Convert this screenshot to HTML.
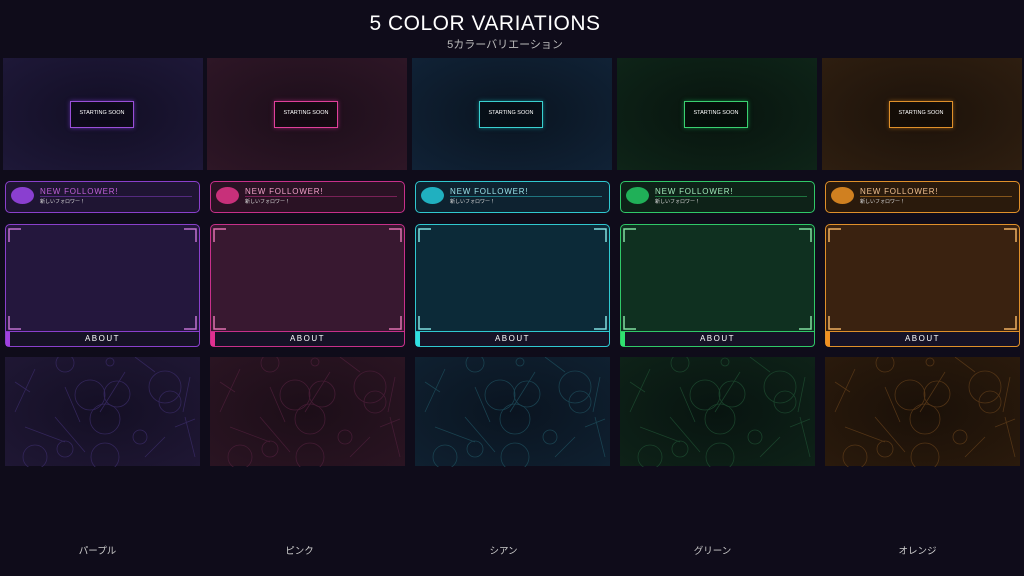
<!DOCTYPE html><html><head><meta charset="utf-8"><style>
*{margin:0;padding:0;box-sizing:border-box}
body{width:1024px;height:576px;background:#0f0c1a;position:relative;overflow:hidden;font-family:"Liberation Sans","Noto Sans CJK JP",sans-serif;color:#fff}
.a{position:absolute}
.title{left:0;width:970px;top:12px;text-align:center;font-size:21px;letter-spacing:0.5px}
.sub{left:0;width:1010px;top:36px;text-align:center;font-size:11px;color:#bbb}
.top{height:112px;top:58px;width:200px}
.box{left:67px;top:43px;width:64px;height:27px;border:1px solid;font-size:5.5px;text-align:center;padding-top:8px;background:rgba(0,0,0,.35)}
.fol{top:181px;width:195px;height:32px;border:1.5px solid;border-radius:5px}
.fol .c{left:5px;top:5px;width:23px;height:17px;border-radius:50%}
.fol .t{left:34px;top:5px;font-size:8px;letter-spacing:.8px}
.fol .l{left:34px;top:14px;width:152px;height:1px;opacity:.5}
.fol .s{left:34px;top:16px;font-size:5px;color:#ddd}
.fr{top:224px;width:195px;height:108px;border:1.5px solid;border-radius:5px 5px 0 0}
.ab{top:331px;width:195px;height:16px;border:1.5px solid;border-radius:0 0 4px 4px;background:#161226;font-size:8px;letter-spacing:1.5px;text-align:center;line-height:14px}
.ab i{position:absolute;left:0;top:0;width:4px;height:100%}
.bg{top:357px;width:195px;height:109px}
.lab{top:543px;width:195px;text-align:center;font-size:9.5px;color:#ccc}
</style></head><body>
<div class="a title">5 COLOR VARIATIONS</div>
<div class="a sub">5カラーバリエーション</div>

<div class="a top" style="left:3px;background:radial-gradient(ellipse at center,#120e24,#1e1838)"><div class="a box" style="border-color:#9a4fd8;box-shadow:0 0 4px #5a2fa0">STARTING SOON</div></div>
<div class="a top" style="left:207px;background:radial-gradient(ellipse at center,#1c0e1a,#2e1626)"><div class="a box" style="border-color:#e0409a;box-shadow:0 0 4px #802060">STARTING SOON</div></div>
<div class="a top" style="left:412px;background:radial-gradient(ellipse at center,#0a1420,#102236)"><div class="a box" style="border-color:#3ad0d0;box-shadow:0 0 4px #107078">STARTING SOON</div></div>
<div class="a top" style="left:617px;background:radial-gradient(ellipse at center,#08140e,#0e2418)"><div class="a box" style="border-color:#3ad070;box-shadow:0 0 4px #107038">STARTING SOON</div></div>
<div class="a top" style="left:822px;background:radial-gradient(ellipse at center,#1c120a,#2e1e10)"><div class="a box" style="border-color:#e0902a;box-shadow:0 0 4px #805018">STARTING SOON</div></div>

<div class="a fol" style="left:5px;border-color:#8a40cc;background:#1f1533"><div class="a c" style="background:#8a3fd0"></div><div class="a t" style="color:#c060d8">NEW FOLLOWER!</div><div class="a l" style="background:#8a40cc"></div><div class="a s">新しいフォロワー！</div></div>
<div class="a fol" style="left:210px;border-color:#c8308a;background:#2a1224"><div class="a c" style="background:#c8307a"></div><div class="a t" style="color:#f0a0c8">NEW FOLLOWER!</div><div class="a l" style="background:#c8308a"></div><div class="a s">新しいフォロワー！</div></div>
<div class="a fol" style="left:415px;border-color:#30c8d0;background:#0e2230"><div class="a c" style="background:#20b0c0"></div><div class="a t" style="color:#9ae0e8">NEW FOLLOWER!</div><div class="a l" style="background:#30c8d0"></div><div class="a s">新しいフォロワー！</div></div>
<div class="a fol" style="left:620px;border-color:#30c868;background:#0e2218"><div class="a c" style="background:#20b058"></div><div class="a t" style="color:#a0e8b8">NEW FOLLOWER!</div><div class="a l" style="background:#30c868"></div><div class="a s">新しいフォロワー！</div></div>
<div class="a fol" style="left:825px;border-color:#e0902a;background:#2a1a0c"><div class="a c" style="background:#d08020"></div><div class="a t" style="color:#f0c090">NEW FOLLOWER!</div><div class="a l" style="background:#e0902a"></div><div class="a s">新しいフォロワー！</div></div>

<div class="a fr" style="left:5px;border-color:#8a40cc;background:#24173d"></div>
<div class="a fr" style="left:210px;border-color:#c8308a;background:#381830"></div>
<div class="a fr" style="left:415px;border-color:#30c8d0;background:#0c2a38"></div>
<div class="a fr" style="left:620px;border-color:#30c868;background:#0f3020"></div>
<div class="a fr" style="left:825px;border-color:#e0902a;background:#3a2210"></div>
<svg class="a" style="left:0;top:224px" width="1024" height="110">
<g fill="none" stroke-width="1.5">
<g stroke="#c070d0"><path d="M9 18V5H21M184 5H196V18M9 92V105H21M184 105H196V92"/></g>
<g stroke="#e070b0" transform="translate(205)"><path d="M9 18V5H21M184 5H196V18M9 92V105H21M184 105H196V92"/></g>
<g stroke="#80e0e0" transform="translate(410)"><path d="M9 18V5H21M184 5H196V18M9 92V105H21M184 105H196V92"/></g>
<g stroke="#80e0a0" transform="translate(615)"><path d="M9 18V5H21M184 5H196V18M9 92V105H21M184 105H196V92"/></g>
<g stroke="#f0b060" transform="translate(820)"><path d="M9 18V5H21M184 5H196V18M9 92V105H21M184 105H196V92"/></g>
</g></svg>
<div class="a ab" style="left:5px;border-color:#8a40cc"><i style="background:#a040e0"></i>ABOUT</div>
<div class="a ab" style="left:210px;border-color:#c8308a"><i style="background:#e03090"></i>ABOUT</div>
<div class="a ab" style="left:415px;border-color:#30c8d0"><i style="background:#30e0e0"></i>ABOUT</div>
<div class="a ab" style="left:620px;border-color:#30c868"><i style="background:#30e070"></i>ABOUT</div>
<div class="a ab" style="left:825px;border-color:#e0902a"><i style="background:#f09020"></i>ABOUT</div>

<div class="a bg" style="left:5px;background:radial-gradient(ellipse at center,#140f24,#1f1734)"></div>
<div class="a bg" style="left:210px;background:radial-gradient(ellipse at center,#1c0e18,#2a1422)"></div>
<div class="a bg" style="left:415px;background:radial-gradient(ellipse at center,#0a1420,#0f2030)"></div>
<div class="a bg" style="left:620px;background:radial-gradient(ellipse at center,#081410,#0e2218)"></div>
<div class="a bg" style="left:825px;background:radial-gradient(ellipse at center,#1a1008,#2a1a0c)"></div>
<svg class="a" style="left:0;top:357px" width="1024" height="110">
<defs><g id="p" fill="none" stroke-width="0.8"><circle cx="85" cy="38" r="15"/><circle cx="112" cy="37" r="13"/><circle cx="100" cy="62" r="15"/><circle cx="160" cy="30" r="16"/><circle cx="165" cy="45" r="11"/><circle cx="30" cy="100" r="12"/><circle cx="60" cy="92" r="8"/><circle cx="100" cy="100" r="14"/><circle cx="135" cy="80" r="7"/><circle cx="105" cy="5" r="4"/><circle cx="60" cy="6" r="9"/><path d="M30 12L10 55M60 30L75 65M50 60L80 95M20 70L60 85M120 15L95 55M160 80L140 100M180 60L190 100M170 70L190 62M185 20L178 55M130 0L150 15M10 25L25 35"/></g></defs>
<use href="#p" x="5" stroke="#33265a"/>
<use href="#p" x="210" stroke="#441c34"/>
<use href="#p" x="415" stroke="#1a4250"/>
<use href="#p" x="620" stroke="#1a422b"/>
<use href="#p" x="825" stroke="#523416"/>
</svg>

<div class="a lab" style="left:0">パープル</div>
<div class="a lab" style="left:202px">ピンク</div>
<div class="a lab" style="left:406px">シアン</div>
<div class="a lab" style="left:615px">グリーン</div>
<div class="a lab" style="left:820px">オレンジ</div>
</body></html>
